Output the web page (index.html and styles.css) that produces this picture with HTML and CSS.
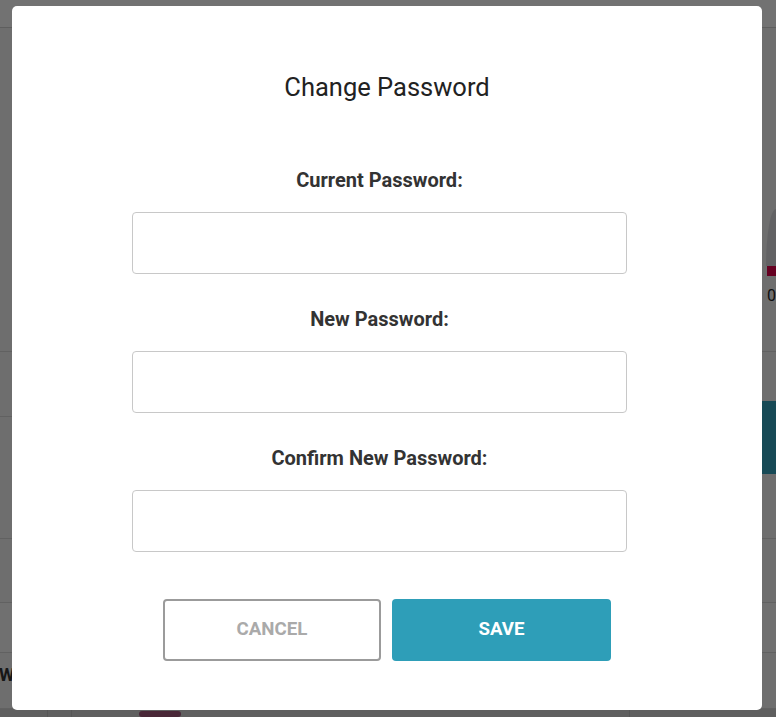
FILE: index.html
```html
<!DOCTYPE html>
<html lang="en">
<head>
<meta charset="utf-8">
<title>Change Password</title>
<link rel="stylesheet" href="styles.css">
</head>
<body>
<div class="page">
  <header class="topbar"></header>
  <section class="row row-a">
    <div class="gauge">
      <div class="gauge-arc"></div>
      <div class="gauge-bar"></div>
      <div class="gauge-val">0</div>
    </div>
  </section>
  <section class="row row-b"></section>
  <section class="row row-c"><div class="teal-block"></div></section>
  <section class="row row-d"></section>
  <section class="row row-e"></section>
  <section class="row row-f"><span class="col-head">WA</span></section>
  <section class="row row-g">
    <div class="cell c1"></div><div class="cell c2"></div><div class="cell c3"><span class="pill"></span></div>
  </section>
</div>

<div class="backdrop">
  <div class="modal" role="dialog" aria-labelledby="cp-title">
    <h1 id="cp-title" class="modal-title">Change Password</h1>
    <form class="pw-form">
      <div class="field">
        <label class="field-label" for="cur">Current Password:</label>
        <input class="field-input" id="cur" type="password">
      </div>
      <div class="field">
        <label class="field-label" for="new">New Password:</label>
        <input class="field-input" id="new" type="password">
      </div>
      <div class="field">
        <label class="field-label" for="conf">Confirm New Password:</label>
        <input class="field-input" id="conf" type="password">
      </div>
    </form>
    <div class="actions">
      <button class="btn btn-cancel" type="button">Cancel</button>
      <button class="btn btn-save" type="button">Save</button>
    </div>
  </div>
</div>
</body>
</html>
```

FILE: styles.css
```css
* { box-sizing: border-box; }

html, body {
  margin: 0;
  padding: 0;
  height: 100%;
}

body {
  font-family: Roboto, "Liberation Sans", Arial, sans-serif;
  background: #f2f2f2;
  overflow: hidden;
}

/* ---------- underlying page (dimmed) ---------- */
.page {
  height: 717px;
  display: flex;
  flex-direction: column;
}

.topbar {
  height: 28px;
  background: #fafafa;
  border-bottom: 1px solid #cfcfcf;
}

.row {
  border-bottom: 1px solid #d6d6d6;
  display: flex;
  justify-content: flex-end;
}

.row-a { height: 324px; align-items: flex-start; }
.row-b { height: 66px; }
.row-c { height: 122px; align-items: flex-start; }
.row-d { height: 64px; }
.row-e { height: 50px; background: #f6f6f6; }
.row-f { height: 56px; justify-content: flex-start; align-items: center; }
.row-g { flex: 1; justify-content: flex-start; border-bottom: none; background: #d0d0d0; }

.gauge {
  width: 14px;
  margin-top: 181px;
  display: flex;
  flex-direction: column;
  align-items: flex-end;
}
.gauge-arc {
  width: 10px;
  height: 57px;
  background: #d8d8dc;
  border-top-left-radius: 10px 57px;
}
.gauge-bar {
  width: 9px;
  height: 10px;
  background: #e0004a;
}
.gauge-val {
  font-size: 16px;
  line-height: 20px;
  color: #222;
  width: 9px;
  overflow: hidden;
  margin-top: 10px;
}

.teal-block {
  width: 14px;
  height: 73px;
  background: #33a2bd;
  margin-top: -16px;
}

.col-head {
  font-weight: 700;
  font-size: 18px;
  color: #333;
  margin-top: -12px;
  margin-left: -1px;
}

.cell { border-right: 1px solid #bdbdbd; height: 100%; }
.c1 { width: 48px; }
.c2 { width: 24px; }
.c3 { width: 558px; padding-left: 67px; padding-top: 2px; }
.pill { display: block; width: 42px; height: 6px; border-radius: 3px; background: #a0577a; }

/* ---------- overlay ---------- */
.backdrop {
  position: fixed;
  inset: 0;
  background: rgba(0, 0, 0, 0.545);
  display: flex;
  align-items: flex-start;
  justify-content: flex-start;
  padding: 6px 0 0 12px;
}

.modal {
  width: 750px;
  height: 704px;
  background: #fff;
  border-radius: 5px;
  padding-top: 66px;
  display: flex;
  flex-direction: column;
  align-items: center;
}

.modal-title {
  margin: 0;
  font-size: 25.5px;
  font-weight: 400;
  line-height: 30px;
  color: #222;
}

.pw-form {
  align-self: flex-start;
  margin-left: 120px;
  width: 495px;
  margin-top: 67px;
  display: flex;
  flex-direction: column;
  gap: 34px;
}

.field {
  display: flex;
  flex-direction: column;
  align-items: center;
}

.field-label {
  font-size: 20px;
  font-weight: 700;
  line-height: 22px;
  color: #333;
  margin-bottom: 21px;
}

.field-input {
  width: 100%;
  height: 62px;
  border: 1px solid #c8c8c8;
  border-radius: 4px;
  background: #fff;
  padding: 0 12px;
  font-size: 18px;
  outline: none;
}

.actions {
  margin-top: 47px;
  display: flex;
  gap: 11px;
}

.btn {
  width: 218px;
  height: 62px;
  border-radius: 4px;
  font-family: Roboto, "Liberation Sans", Arial, sans-serif;
  font-size: 18.7px;
  font-weight: 700;
  text-transform: uppercase;
  padding: 0 0 3px;
  cursor: pointer;
}

.btn-cancel {
  background: #fff;
  border: 2px solid #9b9b9b;
  color: #aaaaaa;
}

.btn-save {
  width: 219px;
  background: #2e9eb8;
  border: none;
  color: #fff;
}
```
